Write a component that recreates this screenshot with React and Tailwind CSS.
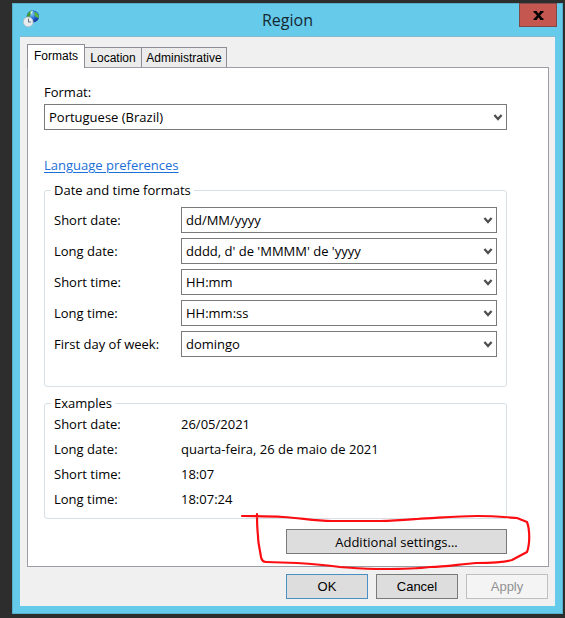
const FORMAT_FIELDS = [
  { id: "short-date", label: "Short date:", value: "dd/MM/yyyy" },
  { id: "long-date", label: "Long date:", value: "dddd, d' de 'MMMM' de 'yyyy" },
  { id: "short-time", label: "Short time:", value: "HH:mm" },
  { id: "long-time", label: "Long time:", value: "HH:mm:ss" },
  { id: "first-day", label: "First day of week:", value: "domingo" },
];

const EXAMPLES = [
  ["Short date:", "26/05/2021"],
  ["Long date:", "quarta-feira, 26 de maio de 2021"],
  ["Short time:", "18:07"],
  ["Long time:", "18:07:24"],
];

const RegionIcon = () => (
  <svg className="w-[18px] h-[18px]" viewBox="0 0 18 18" aria-hidden="true">
    <defs>
      <radialGradient id="globe" cx="0.4" cy="0.3" r="0.75">
        <stop offset="0" stopColor="#8fd4f5" />
        <stop offset="0.5" stopColor="#2468d8" />
        <stop offset="1" stopColor="#102a8c" />
      </radialGradient>
    </defs>
    <circle cx="9.8" cy="6.4" r="6.2" fill="url(#globe)" />
    <path d="M3.8 6.5C4.2 3.4 6.2 1 9 .5L8.8 2.6 7.4 4.4 7.2 6.6 5 7.2z" fill="#3f9d35" />
    <path d="M11.6 1.4l2.6 1.6 1.6 2.8-.4 2.6-1.6-1.2-1.6-.6-.9-2.2z" fill="#58b545" />
    <path d="M7.6 1.6l2.4-.6-1 2-1.6 1z" fill="#e4f7e8" />
    <circle cx="5.2" cy="11.9" r="4.9" fill="#e9ecef" stroke="#b3bbc2" strokeWidth="0.8" />
    <path d="M5.5 8.6v3.6M5.5 12h2.6" stroke="#5f6973" strokeWidth="0.9" fill="none" />
  </svg>
);

const Select = ({ id, value }) => (
  <div className="relative flex-1">
    <select
      id={id}
      defaultValue={value}
      className="block w-full h-[26px] appearance-none rounded-none border border-[#7a7a7a] bg-white pl-1 pr-6 text-[13px] leading-4 text-black"
    >
      <option value={value}>{value}</option>
    </select>
    <svg className="pointer-events-none absolute right-1 top-2 w-2.5 h-2.5" viewBox="0 0 10 10" aria-hidden="true">
      <path d="M1.4 3L5 7 8.6 3" fill="none" stroke="#505050" strokeWidth="2.3" />
    </svg>
  </div>
);

const Tab = ({ active, className, children }) => (
  <button
    type="button"
    role="tab"
    aria-selected={active}
    className={`border border-[#8b8e96] font-['Liberation_Sans',sans-serif] text-[12px] leading-4 whitespace-nowrap ${className}`}
  >
    {children}
  </button>
);

const DialogButton = ({ disabled, className, children }) => (
  <button type="button" disabled={disabled} className={`w-[82px] h-[25px] border font-['Liberation_Sans',sans-serif] ${className}`}>
    {children}
  </button>
);

// hand-drawn loop around the "Additional settings..." button
const RedMarker = () => (
  <svg className="pointer-events-none absolute -left-[46px] -top-[17px] w-[292px] h-[60px]" viewBox="0 0 292 60" aria-hidden="true">
    <path
      d="M2 4C16 4 30 4 43 5C61 6 74 9 92 9H140C154 9 165 8 177 7C198 6 216 4 237 4C252 4 263 5 277 6L287 10C290 18 290 32 287 40L272 48C262 51 250 51 237 51C220 52 207 55 190 55C174 57 160 57 143 57C126 57 115 56 100 55C84 53 72 52 57 51L26 50Q22 50 21 45C20 38 18 31 18 24C17 15 17 10 17 2"
      fill="none"
      stroke="#fb0d12"
      strokeWidth="2.2"
      strokeLinecap="round"
      strokeLinejoin="round"
    />
  </svg>
);

export default function App() {
  return (
    <div className="min-h-screen flex flex-col bg-[#2d2d2d] pt-[3px] pl-3 pr-0.5 pb-1 font-['Open_Sans','Noto_Sans',sans-serif] text-[13px] leading-4 text-black">
      <div className="flex-1 flex flex-col bg-[#66caeb] border border-[#57aecb] px-[7px] pb-[7px]">
        <header className="relative flex h-8 items-center justify-center">
          <div className="absolute left-[3px] top-[6px]">
            <RegionIcon />
          </div>
          <h1 className="text-[16px] leading-6 text-[#142832]">Region</h1>
          <button
            type="button"
            aria-label="Close"
            className="absolute -right-0.5 -top-px w-[38px] h-6 flex items-center justify-center border border-[#7e4a48] bg-[#c4574f]"
          >
            <svg className="w-[11px] h-[9px]" viewBox="0 0 11 9" aria-hidden="true">
              <path d="M2 .5L9 8.5M9 .5L2 8.5" stroke="#000" strokeWidth="2.6" />
              <path d="M.5 .8h3.4M7.1 .8h3.4M.5 8.2h3.4M7.1 8.2h3.4" stroke="#000" strokeWidth="1.4" />
            </svg>
          </button>
        </header>

        <main className="flex-1 flex flex-col bg-[#f0f0f0] border-t border-[#86b9cc] pt-[7px] pl-[7px] pr-[6px] pb-[7px]">
          <div role="tablist" className="relative flex items-end">
            <Tab active className="w-[58px] h-6 -mb-px border-b-0 bg-white pb-0.5">Formats</Tab>
            <Tab active={false} className="w-[57px] h-5 border-l-0 border-b-0 bg-[#ececec]">Location</Tab>
            <Tab active={false} className="w-[85px] h-5 border-l-0 border-b-0 bg-[#ececec]">Administrative</Tab>
          </div>

          <section className="flex-1 border border-[#9b9ea6] bg-white pt-4 pl-4 pr-[41px] pb-3">
            <label htmlFor="format" className="block mb-1">Format:</label>
            <div className="flex">
              <Select id="format" value="Portuguese (Brazil)" />
            </div>

            <a href="#language" className="block w-fit mt-[27px] text-[#1a6fd8] underline underline-offset-2">Language preferences</a>

            <fieldset className="mt-[9px] rounded-[3px] border border-[#d6e0e7] px-[9px] pb-[29px]">
              <legend className="h-4 -ml-[3px] px-[3px]">Date and time formats</legend>
              <div className="flex flex-col gap-[5px] pt-[9px]">
                {FORMAT_FIELDS.map((f) => (
                  <div key={f.id} className="flex items-center">
                    <label htmlFor={f.id} className="w-[127px]">{f.label}</label>
                    <Select id={f.id} value={f.value} />
                  </div>
                ))}
              </div>
            </fieldset>

            <fieldset className="mt-2 rounded-[3px] border border-[#d6e0e7] px-[9px] pb-[7px]">
              <legend className="h-4 -ml-[3px] px-[3px]">Examples</legend>
              <dl>
                {EXAMPLES.map(([label, value]) => (
                  <div key={label} className="flex h-[25px] items-center">
                    <dt className="w-[127px]">{label}</dt>
                    <dd>{value}</dd>
                  </div>
                ))}
              </dl>
            </fieldset>

            <div className="relative ml-auto mt-[10px] w-[221px]">
              <button type="button" className="block w-full h-[25px] border border-[#7a7a7a] bg-[#dddddd]">
                Additional settings...
              </button>
              <RedMarker />
            </div>
          </section>

          <div className="flex justify-end gap-2 pt-[7px] pr-px">
            <DialogButton className="border-[#4a90c4] bg-[#dddddd]">OK</DialogButton>
            <DialogButton className="border-[#7a7a7a] bg-[#dddddd]">Cancel</DialogButton>
            <DialogButton disabled className="border-[#bfbfbf] bg-[#f4f4f4] text-[#919191]">Apply</DialogButton>
          </div>
        </main>
      </div>
    </div>
  );
}
